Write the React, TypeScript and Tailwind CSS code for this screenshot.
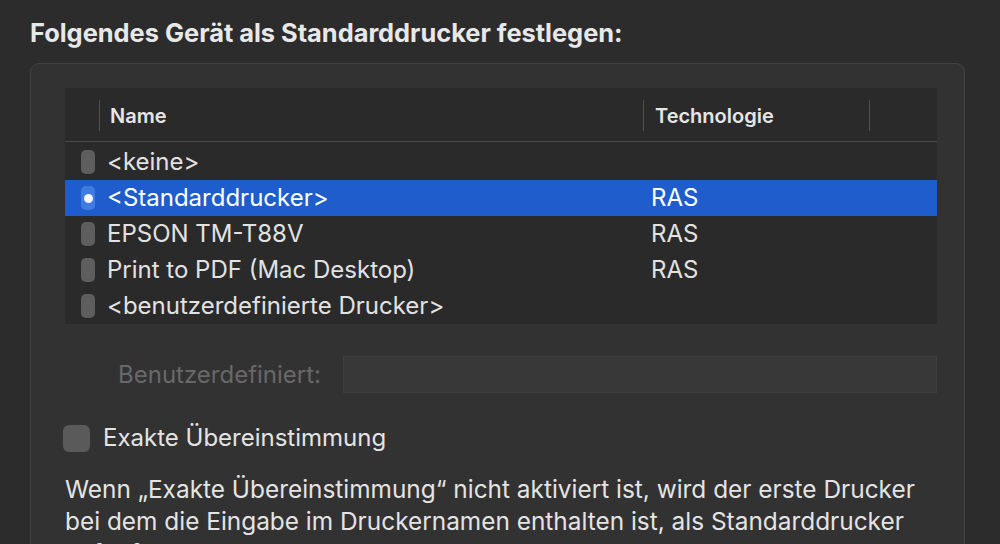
import React from "react";

const printers = [
  { name: "<keine>", tech: "" },
  { name: "<Standarddrucker>", tech: "RAS", selected: true },
  { name: "EPSON TM-T88V", tech: "RAS" },
  { name: "Print to PDF (Mac Desktop)", tech: "RAS" },
  { name: "<benutzerdefinierte Drucker>", tech: "" },
];

function RowIcon({ selected }: { selected?: boolean }) {
  if (selected) {
    return (
      <span className="flex h-[24px] w-[14px] items-center justify-center rounded-[5px] bg-[#3f7be0]">
        <span className="h-[9px] w-[9px] rounded-full bg-[#f4f7ff]" />
      </span>
    );
  }
  return <span className="h-[24px] w-[14px] rounded-[5px] bg-[#5e5e5e]" />;
}

export default function App() {
  return (
    <div className="h-[544px] w-[1000px] overflow-hidden bg-[#2c2c2c] font-['Inter','Liberation_Sans',sans-serif] text-[#e4e4e4]">
      <h1 className="pl-[30px] pt-[19px] text-[25.4px] font-bold leading-[28px] text-[#e8e8e8]">
        Folgendes Gerät als Standarddrucker festlegen:
      </h1>

      <div className="ml-[30px] mt-[16px] w-[935px] rounded-t-[9px] border border-b-0 border-[#434343] bg-[#323232] pb-[40px] pl-[34px] pt-[24px]">
        {/* printer table */}
        <div className="w-[872px] bg-[#2a2a2a]">
          <div className="flex h-[54px] items-center border-b border-[#4a4a4a] pt-[2px] text-[20px] font-semibold text-[#e6e6e6]">
            <span className="ml-[34px] h-[31px] w-px bg-[#505050]" />
            <span className="ml-[10px] w-[533px]">Name</span>
            <span className="h-[31px] w-px bg-[#505050]" />
            <span className="ml-[11px] w-[214px]">Technologie</span>
            <span className="h-[31px] w-px bg-[#505050]" />
          </div>
          <div className="pt-[2px]">
            {printers.map((p) => (
              <div
                key={p.name}
                className={`flex h-[36px] items-center text-[24px] ${
                  p.selected ? "bg-[#1f5dcc] text-white" : "text-[#e2e2e2]"
                }`}
              >
                <span className="ml-[16px] flex w-[26px]">
                  <RowIcon selected={p.selected} />
                </span>
                <span className="w-[544px]">{p.name}</span>
                <span>{p.tech}</span>
              </div>
            ))}
          </div>
        </div>

        {/* custom field */}
        <div className="mt-[32px] flex h-[37px] items-center">
          <span className="ml-[53px] w-[225px] text-[24px] text-[#686868]">Benutzerdefiniert:</span>
          <div className="h-[37px] w-[594px] border border-[#3e3e3e] bg-[#383838]" />
        </div>

        {/* checkbox */}
        <label className="mt-[27px] flex items-center">
          <span className="ml-[-2px] h-[27px] w-[27px] rounded-[6px] bg-[#5a5a5a]" />
          <span className="ml-[13px] text-[24px] text-[#e4e4e4]">Exakte Übereinstimmung</span>
        </label>

        <p className="mt-[17px] w-[890px] text-[24.4px] leading-[32px] text-[#e4e4e4]">
          Wenn „Exakte Übereinstimmung“ nicht aktiviert ist, wird der erste Drucker
          <br />
          bei dem die Eingabe im Druckernamen enthalten ist, als Standarddrucker
          <br />
          aufgefasst.
        </p>
      </div>
    </div>
  );
}
